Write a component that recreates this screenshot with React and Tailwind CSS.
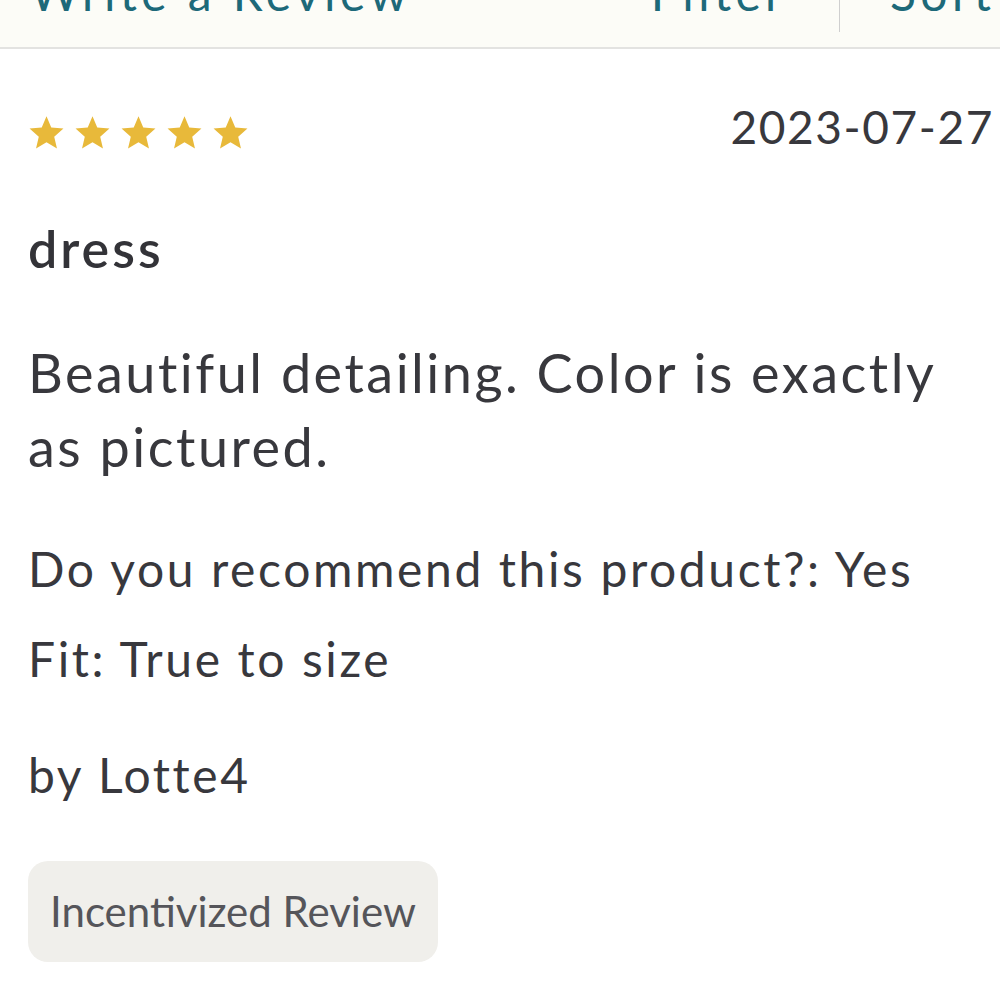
const Star = () => (
  <svg width="37" height="37" viewBox="0 0 24 24" className="fill-[#e8b93a]">
    <path d="M12 1.5l3.09 7.26 7.91.7-6 5.22 1.79 7.74L12 18.3l-6.79 4.12L7 14.68l-6-5.22 7.91-.7z" />
  </svg>
);

const App = () => {
  return (
    <div className="w-[1000px] h-[1000px] overflow-hidden bg-white font-['Lato','Liberation_Sans',sans-serif] text-[#38383d]">
      <div className="-mt-[40px] h-[89px] bg-[#fcfcf7] border-b-2 border-[#e3e3e1] flex items-start text-[48px] leading-[48px] tracking-[4.4px] text-[#1d6979]">
        <div className="pl-[30px] pt-[9px] flex-1">Write a Review</div>
        <div className="pt-[9px] pr-[52px]">Filter</div>
        <div className="w-px h-[72px] bg-[#cfcfcf]"></div>
        <div className="pt-[9px] pl-[50px] w-[160px]">Sort</div>
      </div>

      <div className="pl-[28px] pr-[6px]">
        <div className="mt-[50px] flex justify-between items-start">
          <div className="mt-[15px] flex gap-[9px]">
            <Star />
            <Star />
            <Star />
            <Star />
            <Star />
          </div>
          <div className="text-[46px] leading-[56px] tracking-[1.6px]">2023-07-27</div>
        </div>

        <h3 className="mt-[62px] text-[52px] leading-[62px] font-semibold tracking-[3px] text-[#333338]">dress</h3>

        <p className="mt-[57px] text-[54px] leading-[74px] tracking-[2.5px]">
          Beautiful detailing. Color is exactly as pictured.
        </p>

        <div className="text-[48px] leading-[72px] tracking-[2.6px]">
          <p className="mt-[49px]">Do you recommend this product?: Yes</p>
          <p className="mt-[18px]">Fit: True to size</p>
          <p className="mt-[44px]">by Lotte4</p>
        </div>

        <div className="mt-[50px] inline-flex items-center h-[101px] px-[22px] rounded-[20px] bg-[#f0efeb] text-[42px] text-[#55555a]">
          Incentivized Review
        </div>
      </div>
    </div>
  );
};

export default App;
